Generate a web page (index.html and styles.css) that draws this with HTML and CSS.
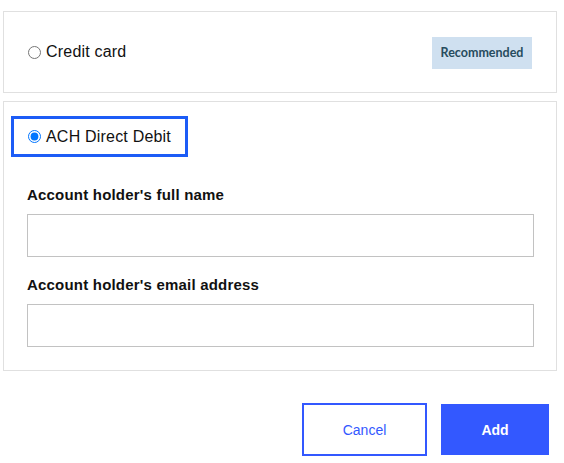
FILE: index.html
```html
<!DOCTYPE html>
<html>
<head>
<meta charset="utf-8">
<link rel="stylesheet" href="styles.css">
</head>
<body>
<div class="page">
  <div class="card card-cc">
    <label class="option">
      <input type="radio" name="pay">
      <span>Credit card</span>
    </label>
    <span class="badge">Recommended</span>
  </div>
  <div class="card card-ach">
    <label class="option focus">
      <input type="radio" name="pay" checked>
      <span>ACH Direct Debit</span>
    </label>
    <div class="field">
      <div class="field-label">Account holder's full name</div>
      <input class="text" type="text">
    </div>
    <div class="field">
      <div class="field-label">Account holder's email address</div>
      <input class="text" type="text">
    </div>
  </div>
  <div class="actions">
    <button class="btn btn-cancel">Cancel</button>
    <button class="btn btn-add">Add</button>
  </div>
</div>
</body>
</html>
```

FILE: styles.css
```css
html, body {
  margin: 0;
  padding: 0;
  background: #fff;
}
.page {
  padding: 11px 7px 0 3px;
  font-family: "Liberation Sans", Arial, sans-serif;
  color: #111;
}
.card {
  border: 1px solid #e0e0e0;
  box-sizing: border-box;
}
.card-cc {
  height: 82px;
  display: flex;
  align-items: center;
  justify-content: space-between;
  padding: 0 24px 0 20px;
}
.option {
  display: flex;
  align-items: center;
  font-size: 16px;
  letter-spacing: 0.2px;
  color: #111;
}
.option input {
  margin: 0 5px 0 4px;
  width: 13px;
  height: 13px;
}
.badge {
  background: #cfe0f0;
  color: #274c5e;
  font-family: Lato, "Open Sans", sans-serif;
  font-weight: 700;
  font-size: 12.5px;
  width: 100px;
  height: 32px;
  display: flex;
  align-items: center;
  justify-content: center;
  margin-top: 1px;
}
.card-ach {
  margin-top: 8px;
  height: 270px;
  padding: 14px 23px 0 7px;
}
.focus {
  width: 177px;
  height: 41px;
  box-sizing: border-box;
  border: 3px solid #1c5cf6;
  padding-left: 10px;
}
.field {
  padding-left: 16px;
}
.field-label {
  font-weight: 700;
  font-size: 15px;
  margin-top: 29px;
  line-height: 17px;
  letter-spacing: 0.2px;
}
.field + .field .field-label {
  margin-top: 19px;
}
.text {
  display: block;
  margin: 11px 0 0 0;
  width: 507px;
  height: 43px;
  box-sizing: border-box;
  border: 1px solid #c2c2c2;
  border-radius: 0;
  outline: none;
}
.actions {
  display: flex;
  justify-content: flex-end;
  gap: 14px;
  margin-top: 32px;
  padding-right: 8px;
}
.btn {
  font-family: "Liberation Sans", Arial, sans-serif;
  font-size: 14px;
  border-radius: 0;
  cursor: pointer;
}
.btn-cancel {
  width: 125px;
  height: 53px;
  background: #fff;
  border: 2px solid #3358ff;
  color: #3358ff;
}
.btn-add {
  width: 108px;
  height: 51px;
  margin-top: 1px;
  background: #3358ff;
  border: none;
  color: #fff;
  font-weight: 700;
}
```
